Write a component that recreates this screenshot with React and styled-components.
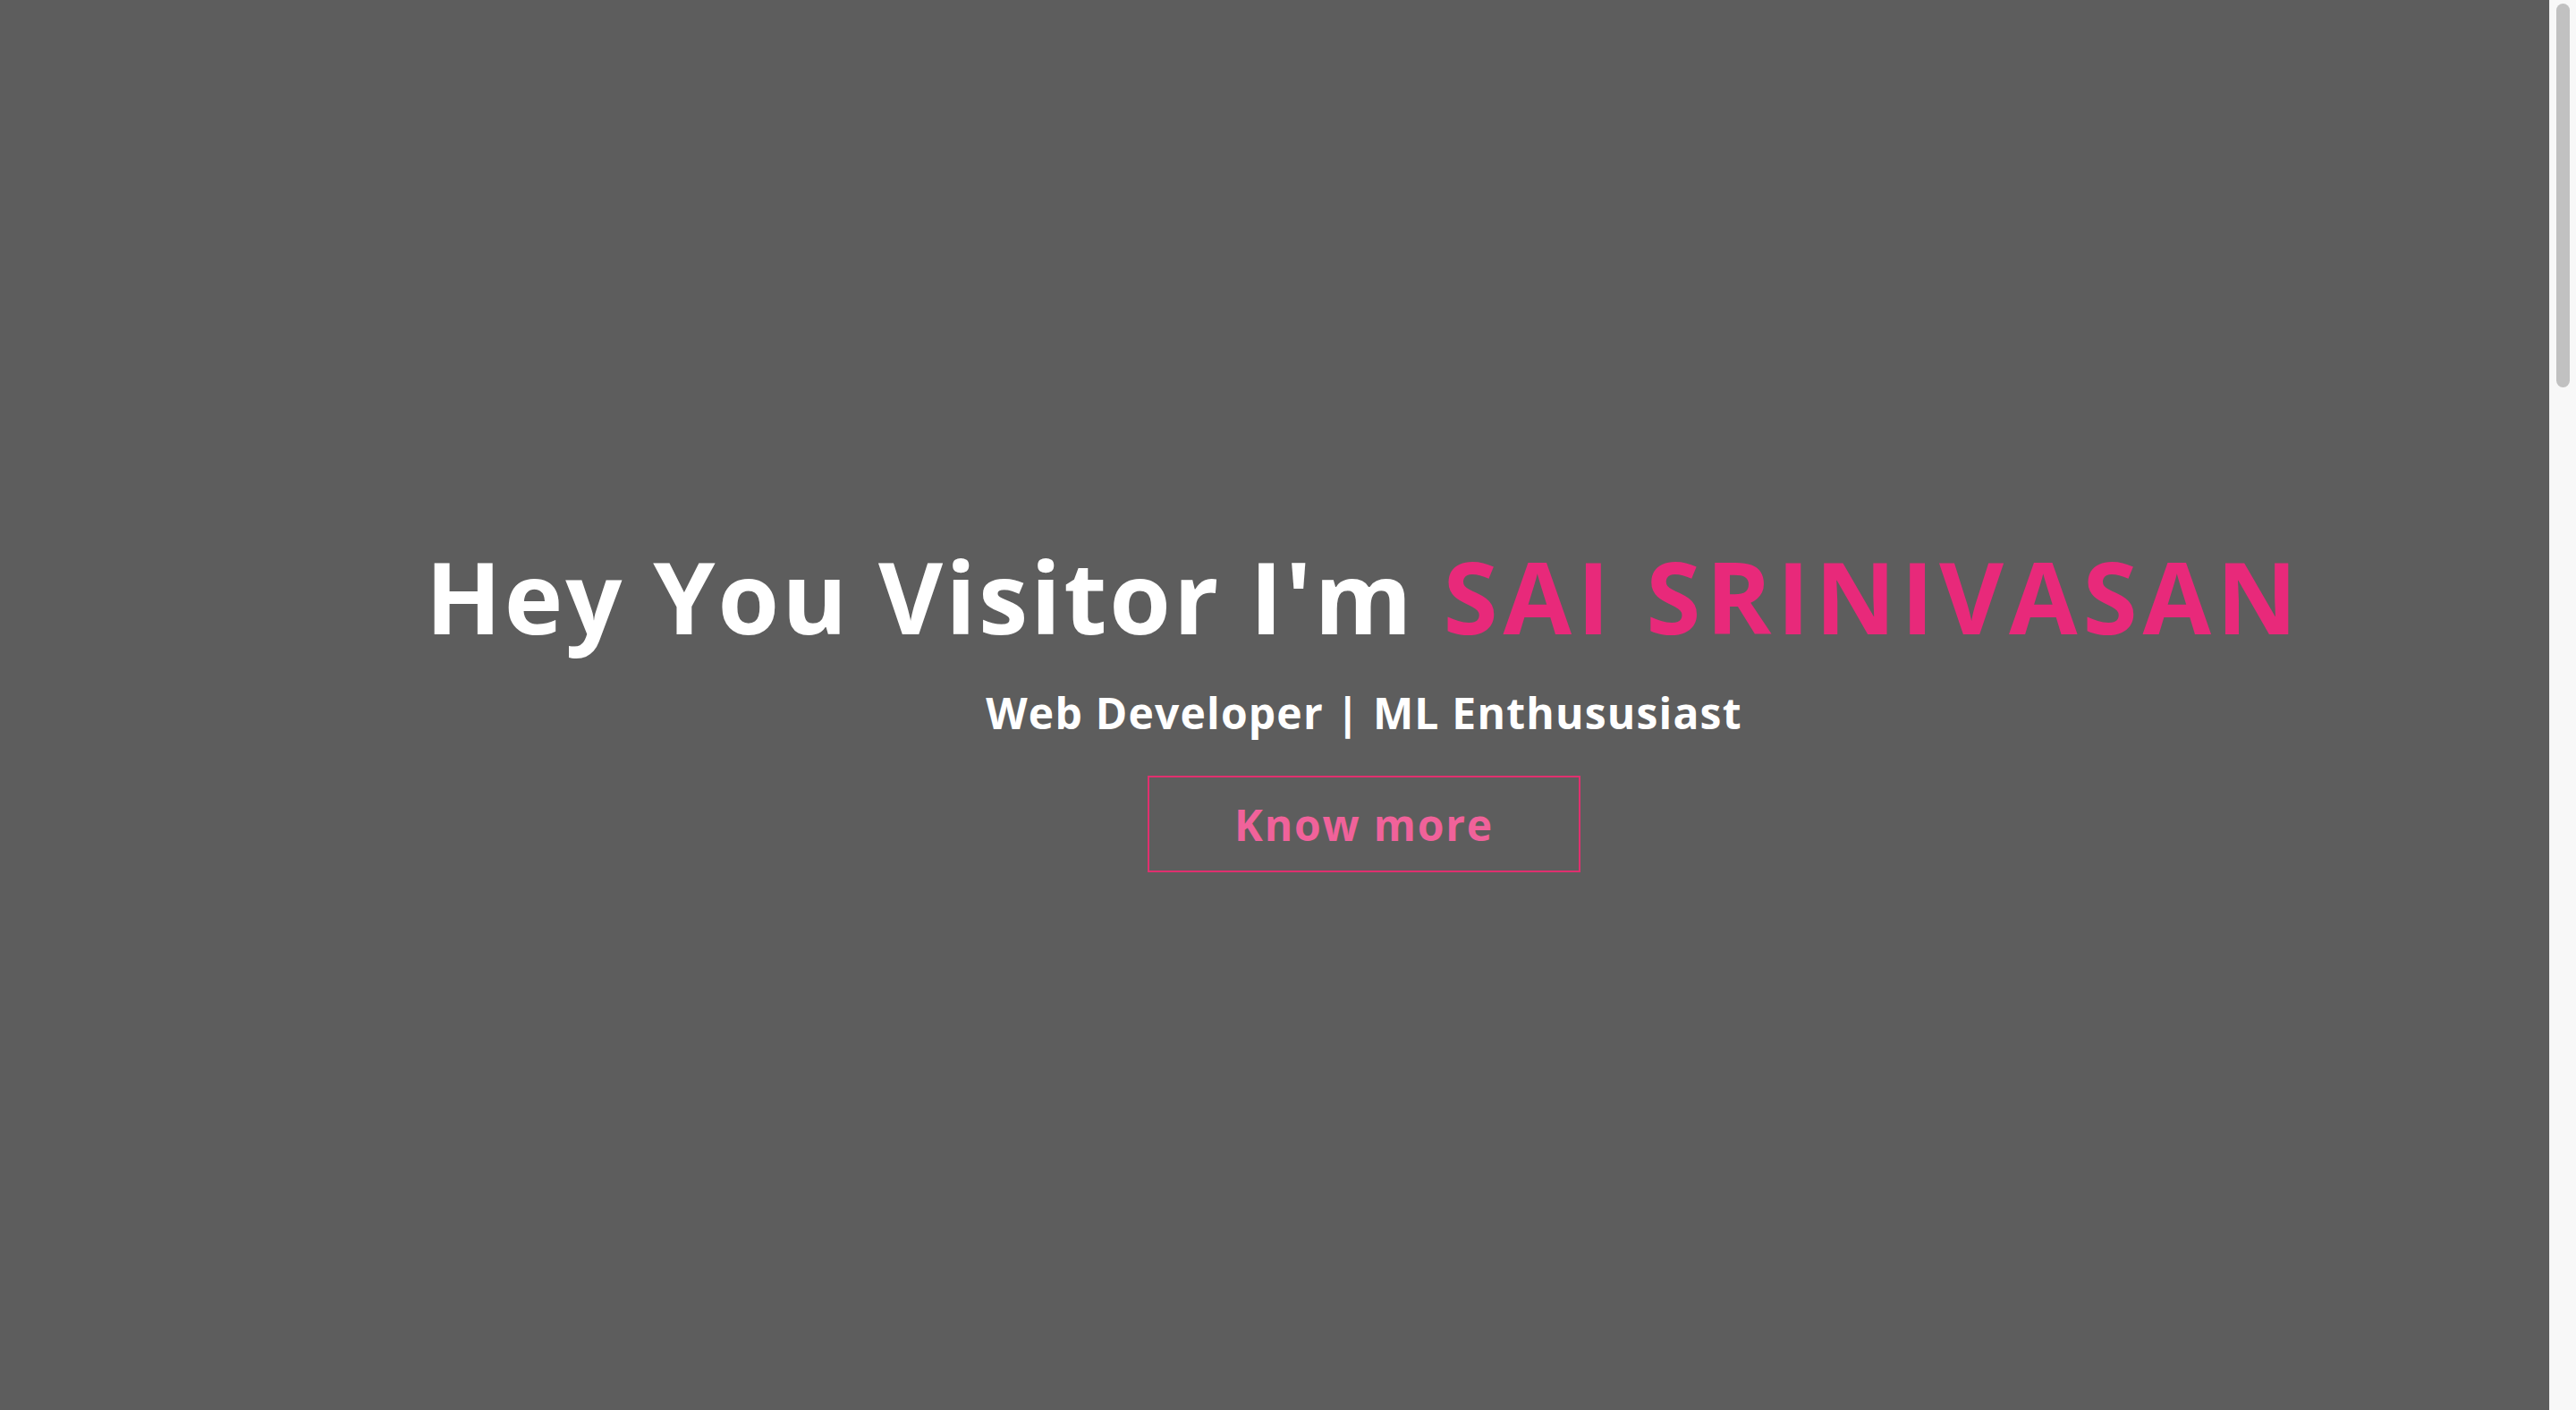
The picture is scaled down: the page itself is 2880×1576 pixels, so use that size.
import React from "react";
import styled, { createGlobalStyle } from "styled-components";

const GlobalStyle = createGlobalStyle`
  html, body {
    margin: 0;
    padding: 0;
    height: 100%;
    overflow: hidden;
    background: #5d5d5d;
  }
  body {
    font-family: "Open Sans", "Liberation Sans", sans-serif;
  }
`;

const Viewport = styled.div`
  display: flex;
  height: 100vh;
`;

const Page = styled.main`
  flex: 1;
  min-width: 0;
  overflow-y: auto;
  background: #5d5d5d;
  scrollbar-width: none;
  &::-webkit-scrollbar {
    display: none;
  }
`;

const ScrollRail = styled.div`
  flex: 0 0 30px;
  box-sizing: border-box;
  background: #f8f8f8;
  border-left: 1px solid #ededed;
  padding: 4px 7px 0 7px;
`;

const ScrollThumb = styled.div`
  height: 429px;
  border-radius: 8px;
  background: #c1c1c1;
`;

const Hero = styled.section`
  min-height: 100vh;
  box-sizing: border-box;
  padding-left: 200px;
  display: flex;
  flex-direction: column;
  align-items: center;
  justify-content: center;
  color: #ffffff;
`;

const Title = styled.h1`
  margin: 0;
  font-size: 111px;
  line-height: 130px;
  font-weight: 700;
  letter-spacing: 3px;
  white-space: nowrap;
`;

const Name = styled.span`
  color: #e8297a;
  letter-spacing: 5.9px;
`;

const Subtitle = styled.h2`
  margin: 34px 0 0;
  font-size: 48px;
  line-height: 64px;
  font-weight: 700;
  letter-spacing: 1.2px;
`;

const Button = styled.a`
  margin-top: 38px;
  display: inline-flex;
  align-items: center;
  justify-content: center;
  box-sizing: border-box;
  width: 484px;
  height: 108px;
  border: 2px solid #e0306f;
  color: #f0629a;
  font-size: 48px;
  font-weight: 700;
  letter-spacing: 1.8px;
  text-decoration: none;
`;

const Section = styled.section`
  height: ${(p) => p.$h}px;
`;

export default function App() {
  return (
    <>
      <GlobalStyle />
      <Viewport>
        <Page>
          <Hero>
            <Title>
              Hey You Visitor I'm <Name>SAI SRINIVASAN</Name>
            </Title>
            <Subtitle>Web Developer | ML Enthususiast</Subtitle>
            <Button href="#about">Know more</Button>
          </Hero>
          <Section id="about" $h={1400} />
          <Section id="projects" $h={1400} />
          <Section id="contact" $h={1414} />
        </Page>
        <ScrollRail aria-hidden="true">
          <ScrollThumb />
        </ScrollRail>
      </Viewport>
    </>
  );
}
